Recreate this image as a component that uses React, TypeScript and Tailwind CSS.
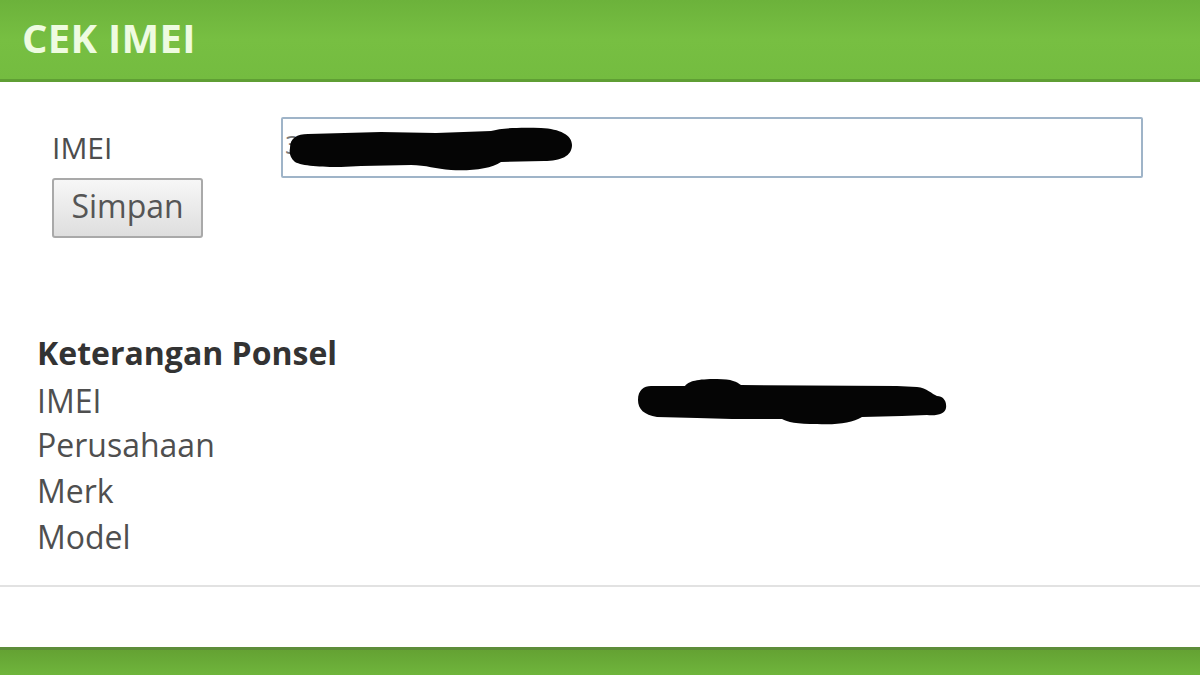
import React from "react";

const font = { fontFamily: '"Open Sans", "Noto Sans", Arial, sans-serif' };

function InputScribble() {
  // redaction over the IMEI value in the input
  return (
    <svg
      className="absolute left-[3px] top-[7px]"
      width="290"
      height="46"
      viewBox="0 0 290 46"
    >
      <path
        d="M4 22 C4 12 11 8 22 8 L95 6 L150 7 L205 5 C215 2 235 1 255 2 C274 3 286 9 286 19 C286 30 275 35 258 35 L215 36 C205 43 185 45 165 44 C150 43 140 39 125 39 L75 40 L55 41 C35 41 16 40 9 36 C4 32 3 27 4 22 Z"
        fill="#050505"
      />
    </svg>
  );
}

function RowScribble() {
  return (
    <svg width="312" height="50" viewBox="0 0 312 50" className="block">
      <path
        d="M1 24 C1 14 7 10 14 10 L48 10 C52 5 60 3 80 3 C95 3 100 6 104 9 L260 10 L280 11 C290 12 295 18 300 20 C306 20 310 25 309 32 C308 38 300 40 290 39 L265 40 L225 41 C215 47 200 49 180 48 C160 48 150 46 145 43 L95 43 L60 42 L20 41 C7 39 1 33 1 24 Z"
        fill="#050505"
      />
    </svg>
  );
}

export default function App() {
  const details = ["IMEI", "Perusahaan", "Merk", "Model"];

  return (
    <div className="w-[1200px] h-[675px] bg-white flex flex-col overflow-hidden" style={font}>
      <header className="h-[82px] shrink-0 bg-gradient-to-b from-[#6cb23b] via-[#77bf42] to-[#74bc40] border-b-[3px] border-[#5f9e34] flex items-center pl-[22px]">
        <h1 className="text-[40px] font-bold tracking-[0.3px] text-[#eefbe0] leading-none pb-[4px]">CEK IMEI</h1>
      </header>

      <main className="flex-1 flex flex-col">
        <section className="pt-[35px] flex">
          <div className="w-[229px] ml-[52px] shrink-0 flex flex-col">
            <label className="h-[61px] flex items-center text-[30px] text-[#4d4d4d]">IMEI</label>
            <button className="w-[151px] h-[60px] rounded-[3px] border-2 border-[#a9a9a9] bg-gradient-to-b from-[#f7f7f7] to-[#dedede] text-[32px] text-[#555] leading-none pb-[4px]">
              Simpan
            </button>
          </div>
          <div className="relative w-[862px] h-[61px] border-2 border-[#9fb4c8] rounded-[2px] bg-white">
            <span className="absolute left-[2px] top-[12px] text-[26px] text-[#777] leading-none">3</span>
            <InputScribble />
          </div>
        </section>

        <section className="mt-[92px] pl-[37px] text-[32px] leading-[46px] text-[#4f4f4f]">
          <h2 className="font-bold text-[#333]">Keterangan Ponsel</h2>
          {details.map((d, i) => (
            <div key={d} className="grid grid-cols-[600px_1fr] h-[46px] items-center">
              <span>{d}</span>
              <div>{i === 0 ? <RowScribble /> : null}</div>
            </div>
          ))}
        </section>

        <div className="mt-[25px] border-t-2 border-[#e2e2e2]"></div>
        <div className="flex-1"></div>
      </main>

      <footer className="h-[28px] shrink-0 bg-gradient-to-b from-[#64a233] to-[#6fb53c] border-t-[3px] border-[#5d8d3a]"></footer>
    </div>
  );
}
